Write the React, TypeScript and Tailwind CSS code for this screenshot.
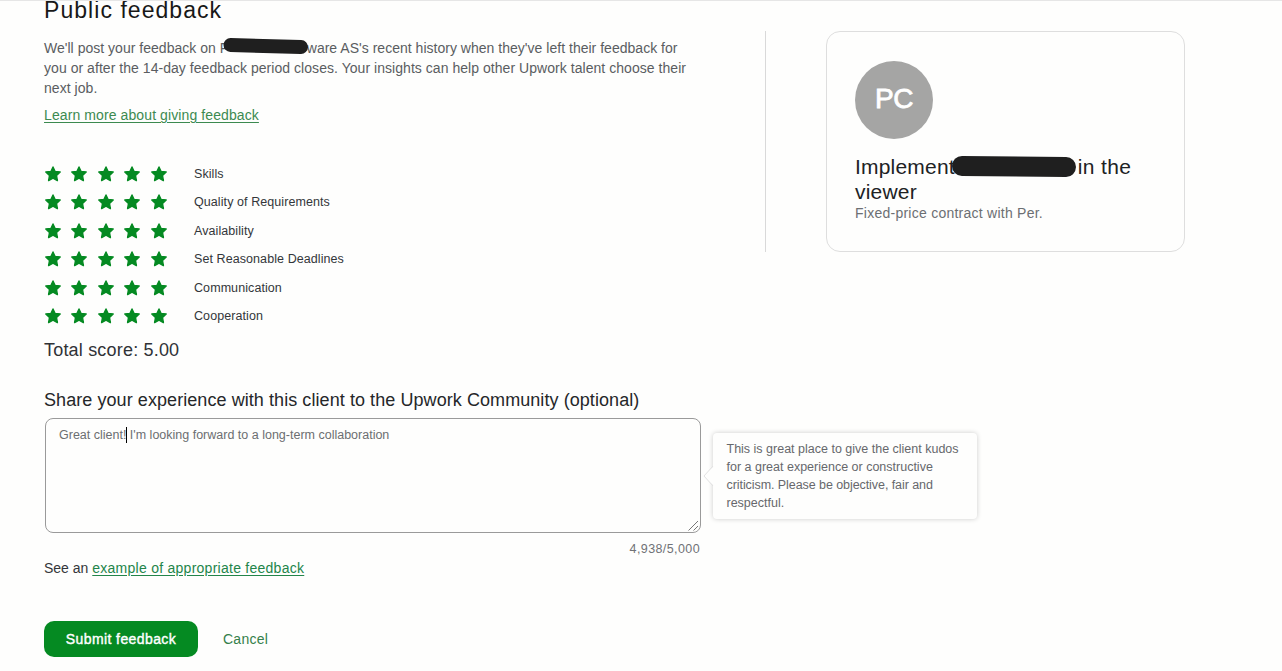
const criteria = [
  "Skills",
  "Quality of Requirements",
  "Availability",
  "Set Reasonable Deadlines",
  "Communication",
  "Cooperation",
];

function Star() {
  return (
    <svg viewBox="0 0 16 16" className="h-4 w-4" fill="#058a22" stroke="#058a22" strokeWidth="1.4" strokeLinejoin="round">
      <path d="M8 1 L10 5.4 L15.2 5.9 L11.5 9.4 L12.4 14.6 L8 12.2 L3.6 14.6 L4.5 9.4 L0.8 5.9 L6 5.4 Z" />
    </svg>
  );
}

function Rating({ label }: { label: string }) {
  return (
    <div className="flex h-[28.5px] items-center">
      <div className="flex w-[149.5px] gap-[10.6px] pb-[1.5px]">
        {[0, 1, 2, 3, 4].map((n) => (
          <Star key={n} />
        ))}
      </div>
      <span className="text-[12.5px] tracking-[0.08px] text-[#33363a]">{label}</span>
    </div>
  );
}

function FeedbackForm() {
  return (
    <main className="ml-[44px] w-[656px] shrink-0">
      <h1 className="h-[18px] text-[23px] leading-[19px] tracking-[1.05px] text-[#181818]">Public feedback</h1>
      <div className="mt-[19px] text-[14px] leading-5 tracking-[0.045px] text-[#5a5d61]">
        <p className="whitespace-nowrap tracking-[0.02px]">
          We'll post your feedback on{" "}
          <span className="relative inline-block w-[87px]">
            F
            <svg className="absolute -top-[1px] left-[3.5px] h-[20px] w-[88px]" viewBox="0 0 88 20">
              <path d="M7.5 8 L78 10" stroke="#1f1f1f" strokeWidth="14" strokeLinecap="round" />
            </svg>
          </span>
          ware AS's recent history when they've left their feedback for
        </p>
        <p className="whitespace-nowrap">
          you or after the 14-day feedback period closes. Your insights can help other Upwork talent choose their
        </p>
        <p>next job.</p>
      </div>
      <a className="mt-[7px] block text-[14px] leading-5 tracking-[0.1px] text-[#3c8a50] underline underline-offset-2">
        Learn more about giving feedback
      </a>

      <section className="ml-[0.5px] mt-[35px]">
        {criteria.map((c) => (
          <Rating key={c} label={c} />
        ))}
      </section>

      <p className="mt-[7px] text-[18px] leading-6 tracking-[0.19px] text-[#303236]">Total score: 5.00</p>
      <h2 className="mt-[26px] whitespace-nowrap text-[18px] leading-6 tracking-[0.07px] text-[#252729]">
        Share your experience with this client to the Upwork Community (optional)
      </h2>

      <div className="relative ml-[0.5px] mt-[6px] h-[115px] w-[656px] rounded-[8px] border border-[#9a9a9a] px-[13.5px] pt-[8px]">
        <p className="flex whitespace-pre text-[12.5px] leading-4 text-[#6c6e71]">
          <span>Great client!</span>
          <span className="-mr-[1px] h-4 w-px bg-black" />
          <span> I'm looking forward to a long-term collaboration</span>
        </p>
        <svg className="absolute bottom-px right-px h-[11px] w-[11px]" viewBox="0 0 11 11" stroke="#777" strokeWidth="1">
          <path d="M0.5 10.5 L10 1 M5.5 10.5 L10 6" />
        </svg>
        <div className="absolute left-[667px] top-[14px] h-[86px] w-[264px] rounded-[4px] bg-[#fefefd] pl-[14px] pt-[7px] text-[12.5px] leading-[18px] text-[#66686c] shadow-[0_0_5px_rgba(0,0,0,0.2)]">
          <svg className="absolute -left-[10px] top-[31px] h-[24px] w-[12px]" viewBox="0 0 12 24">
            <path d="M12 1 L1 12 L12 23" fill="#fefefd" />
            <path d="M10 2 L1 12 L10 22" fill="none" stroke="#e2e2e2" />
          </svg>
          <p>This is great place to give the client kudos</p>
          <p>for a great experience or constructive</p>
          <p className="tracking-[-0.07px]">criticism. Please be objective, fair and</p>
          <p>respectful.</p>
        </div>
      </div>

      <p className="mt-[8px] text-right text-[12.5px] leading-4 tracking-[0.4px] text-[#707276]">4,938/5,000</p>
      <p className="mt-[1px] text-[14px] leading-5 text-[#34363a]">
        See an{" "}
        <a className="tracking-[0.26px] text-[#23854a] underline underline-offset-2">example of appropriate feedback</a>
      </p>

      <div className="mt-[43px] flex items-center">
        <button className="h-[36px] w-[154px] rounded-[10px] bg-[#058a22] text-[14px] font-medium tracking-[0.4px] text-white [-webkit-text-stroke:0.4px_white]">
          Submit feedback
        </button>
        <button className="ml-[25px] text-[14px] tracking-[0.25px] text-[#35804a]">Cancel</button>
      </div>
    </main>
  );
}

function ContractCard() {
  return (
    <aside className="ml-[65px] mt-[30px] flex h-[221px] border-l border-[#d9d9d9] pl-[60px]">
      <div className="h-[221px] w-[359px] rounded-[14px] border border-[#dedede] px-[28px] pt-[29px]">
        <div className="flex h-[78px] w-[78px] items-center justify-center rounded-full bg-[#a5a5a4] pb-[3px] text-[28px] tracking-[-0.5px] text-white [-webkit-text-stroke:0.8px_white]">
          PC
        </div>
        <h3 className="mt-[15px] whitespace-nowrap text-[21px] leading-[25px] text-[#202224]">
          <span className="tracking-[0.2px]">Implement</span>
          <span className="relative inline-block w-[123px]">
            &nbsp;
            <svg className="absolute -left-[4px] top-[1px] h-[24px] w-[126px]" viewBox="0 0 126 24">
              <path d="M11 11 L115 12" stroke="#1f1f1f" strokeWidth="20" strokeLinecap="round" />
            </svg>
          </span>
          <span className="tracking-[0.35px]">in the</span>
          <br />
          <span className="tracking-[0.2px]">viewer</span>
        </h3>
        <p className="text-[14px] leading-[18px] tracking-[0.25px] text-[#6c6f73]">Fixed-price contract with Per.</p>
      </div>
    </aside>
  );
}

export default function App() {
  return (
    <div className="flex h-[671px] w-[1282px] items-start overflow-hidden border-t border-[#e6e6e6] bg-[#fefefd] font-['Liberation_Sans',Arial,sans-serif]">
      <FeedbackForm />
      <ContractCard />
    </div>
  );
}
